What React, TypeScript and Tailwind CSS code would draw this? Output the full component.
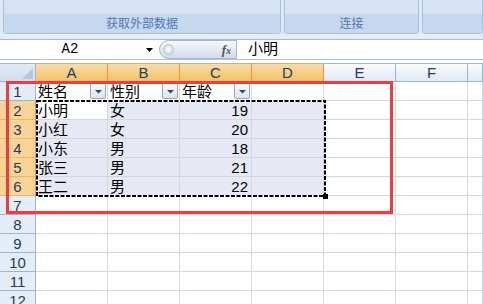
const cols = ["A", "B", "C", "D", "E", "F", ""];

const data: string[][] = [
  ["姓名", "性别", "年龄"],
  ["小明", "女", "19"],
  ["小红", "女", "20"],
  ["小东", "男", "18"],
  ["张三", "男", "21"],
  ["王二", "男", "22"],
];

function FilterButton() {
  return (
    <span className="w-[16px] h-[16px] shrink-0 rounded-[2px] border border-[#9aa6ba] bg-linear-to-b from-[#fbfcfd] to-[#dde3ec] flex items-center justify-center">
      <svg width="7" height="5" viewBox="0 0 7 5">
        <path d="M0 1h7L3.5 4.5z" fill="#27487f" />
      </svg>
    </span>
  );
}

function Group({ label, className }: { label: string; className: string }) {
  return (
    <div
      className={
        "flex flex-col border border-t-0 border-[#a9c1de] rounded-b-[4px] overflow-hidden shadow-[inset_1px_0_0_#eef4fb,inset_-1px_0_0_#eef4fb] " +
        className
      }
    >
      <div className="h-[14px] bg-[#d6e3f4]" />
      <div className="flex-1 bg-[#c4d8ef] flex items-center justify-center text-[12px] text-[#5377ac]">
        {label}
      </div>
    </div>
  );
}

function Ribbon() {
  return (
    <div className="h-[40px] bg-[#e3ecf7] border-b border-[#a7bad1]">
      <div className="h-[35px] flex gap-[3px] pl-[3px] bg-[#dde8f5] border-b border-[#eaf1fa]">
        <Group label="获取外部数据" className="w-[278px]" />
        <Group label="连接" className="w-[135px]" />
        <Group label="" className="flex-1" />
      </div>
    </div>
  );
}

function FormulaBar() {
  return (
    <div className="h-[20px] flex border-b border-[#b4c4d8] bg-white">
      <div className="w-[159px] flex items-center">
        <span className="w-[140px] text-center text-[14px] text-black font-['Liberation_Mono',monospace]">
          A2
        </span>
        <svg width="7" height="4" viewBox="0 0 7 4" className="ml-[6px]">
          <path d="M0 0h7L3.5 4z" fill="#000" />
        </svg>
      </div>
      <div className="w-[78px] h-full rounded-l-full border border-[#a3b7d0] bg-linear-to-b from-[#f6f8fb] to-[#d0dceb] flex items-center pl-[3px]">
        <span className="w-[11px] h-[11px] rounded-full border border-[#b8c2cf] bg-radial from-[#ffffff] to-[#c9cfd8]" />
        <span className="ml-auto mr-[5px] text-[13px] italic font-bold text-[#555] font-['Liberation_Serif',serif] leading-none">
          f<span className="text-[10px]">x</span>
        </span>
      </div>
      <div className="flex-1 flex items-center pl-[11px] text-[15px] text-black">小明</div>
    </div>
  );
}

function Sheet() {
  const rowNums = Array.from({ length: 12 }, (_, i) => i + 1);
  return (
    <div className="relative mt-[3px] grid grid-cols-[36px_repeat(6,72px)_15px] auto-rows-[19px] text-[15px] leading-none">
      {/* corner */}
      <div className="relative border-r border-b border-t border-[#9eb6ce] bg-linear-to-b from-[#e2eaf5] to-[#d1ddee]">
        <svg width="11" height="11" viewBox="0 0 11 11" className="absolute right-[2px] bottom-[2px]">
          <path d="M11 0V11H0z" fill="#b6c7dc" />
        </svg>
      </div>
      {cols.map((c, i) =>
        i < 4 ? (
          <div
            key={"h" + i}
            className="border-r border-b border-t border-r-[#f29436] border-b-[#e9a54f] border-t-[#c9b08a] bg-linear-to-b from-[#f9dca6] to-[#f2c36a] text-[#1f3b5e] flex items-center justify-center"
          >
            {c}
          </div>
        ) : (
          <div
            key={"h" + i}
            className="border-r border-b border-t border-[#9eb6ce] bg-linear-to-b from-[#f9fbfd] to-[#e2e9f3] text-[#1f3b5e] flex items-center justify-center"
          >
            {c}
          </div>
        )
      )}

      {rowNums.map((r) => {
        const sel = r >= 2 && r <= 6;
        const rowData = data[r - 1];
        return [
          <div
            key={"r" + r}
            className={
              sel
                ? "border-r border-b border-r-[#f29436] border-b-[#f0b566] bg-[#f8d597] text-[#1f3b5e] flex items-center justify-center"
                : "border-r border-b border-[#9eb6ce] bg-[#e4ecf7] text-[#1f3b5e] flex items-center justify-center"
            }
          >
            {r}
          </div>,
          ...cols.map((_, ci) => {
            const inRange = sel && ci < 4;
            const active = r === 2 && ci === 0;
            const value = rowData ? rowData[ci] : undefined;
            const bg = active ? "bg-white" : inRange ? "bg-[#e6e9f4]" : "bg-white";
            const isNum = r > 1 && ci === 2;
            return (
              <div
                key={r + "-" + ci}
                className={
                  "border-r border-b border-[#d0d7e5] flex items-center text-[15px] text-black " +
                  bg +
                  (isNum ? " justify-end pr-[3px]" : " justify-between pl-[2px] pr-[1px]")
                }
              >
                {value !== undefined && <span>{value}</span>}
                {r === 1 && ci < 3 && <FilterButton />}
              </div>
            );
          }),
        ];
      })}

      {/* marching ants around A2:D6 */}
      <svg
        width="292"
        height="99"
        viewBox="0 0 292 99"
        className="absolute left-[36px] top-[37px] overflow-visible pointer-events-none"
      >
        <rect x="1" y="1" width="288" height="95" fill="none" stroke="#fff" strokeWidth="2" />
        <rect x="1" y="1" width="288" height="95" fill="none" stroke="#000" strokeWidth="2" strokeDasharray="4 1.5" />
        <rect x="287" y="94" width="5" height="5" fill="#000" />
      </svg>

      {/* red highlight box */}
      <div className="absolute left-[6px] top-[18px] w-[387px] h-[133px] border-[3px] border-[#f23c3c] pointer-events-none" />
    </div>
  );
}

export default function App() {
  return (
    <div className="w-[483px] h-[304px] overflow-hidden bg-white font-['Liberation_Sans','Noto_Sans_CJK_SC',sans-serif]">
      <Ribbon />
      <FormulaBar />
      <Sheet />
    </div>
  );
}
